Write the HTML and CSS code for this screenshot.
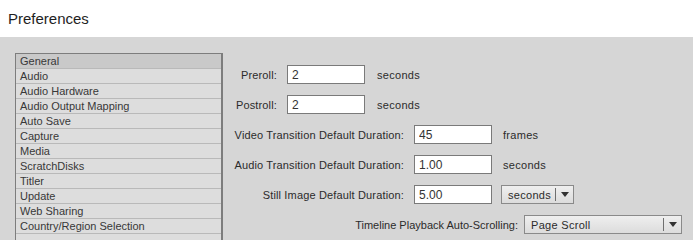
FILE: index.html
```html
<!DOCTYPE html>
<html lang="en">
<head>
  <meta charset="UTF-8" />
  <title>Preferences</title>
  <link rel="stylesheet" href="styles.css">
</head>
<body>

  <header>
    <h1>Preferences</h1>
  </header>

  <div class="panel">
    <ul class="categories">
      <li class="selected">General</li>
      <li>Audio</li>
      <li>Audio Hardware</li>
      <li>Audio Output Mapping</li>
      <li>Auto Save</li>
      <li>Capture</li>
      <li>Media</li>
      <li>ScratchDisks</li>
      <li>Titler</li>
      <li>Update</li>
      <li>Web Sharing</li>
      <li>Country/Region Selection</li>
    </ul>

    <div class="settings">
      <div class="row">
        <label class="lbl-short">Preroll:</label>
        <input type="text" value="2" />
        <span class="unit">seconds</span>
      </div>
      <div class="row">
        <label class="lbl-short">Postroll:</label>
        <input type="text" value="2" />
        <span class="unit">seconds</span>
      </div>
      <div class="row">
        <label class="lbl-mid">Video Transition Default Duration:</label>
        <input type="text" value="45" />
        <span class="unit unit-near">frames</span>
      </div>
      <div class="row">
        <label class="lbl-mid">Audio Transition Default Duration:</label>
        <input type="text" value="1.00" />
        <span class="unit unit-near">seconds</span>
      </div>
      <div class="row">
        <label class="lbl-mid">Still Image Default Duration:</label>
        <input type="text" value="5.00" />
        <div class="dropdown small">
          <span class="value">seconds</span>
          <span class="arrow"></span>
        </div>
      </div>
      <div class="row">
        <label class="lbl-long">Timeline Playback Auto-Scrolling:</label>
        <div class="dropdown wide">
          <span class="value">Page Scroll</span>
          <span class="arrow"></span>
        </div>
      </div>
    </div>
  </div>

</body>
</html>
```

FILE: styles.css
```css
* {
  box-sizing: border-box;
  margin: 0;
  padding: 0;
}

body {
  font-family: 'Liberation Sans', Arial, sans-serif;
  font-size: 11px;
  color: #2b2b2b;
  background: #d6d6d6;
  height: 240px;
  overflow: hidden;
}

header {
  background: #fff;
  height: 37px;
  padding: 10px 0 0 8px;
}

header h1 {
  font-size: 15px;
  font-weight: normal;
  color: #1e1e1e;
}

.panel {
  display: flex;
  padding: 16px 0 0 15px;
}

/* lista de categorias */
.categories {
  list-style: none;
  width: 208px;
  height: 187px;
  border: 1px solid #7d7d7d;
  border-right-width: 2px;
  border-bottom: none;
  background: #dddddd;
}

.categories li {
  height: 15px;
  line-height: 14px;
  padding-left: 4px;
  border-bottom: 1px solid #b9b9b9;
  color: #383838;
}

.categories li.selected {
  background: #c9c9c9;
}

/* ajustes */
.settings {
  padding-top: 12px;
  display: flex;
  flex-direction: column;
  gap: 11px;
}

.row {
  display: flex;
  align-items: center;
  height: 19px;
}

.row label {
  text-align: right;
  color: #2b2b2b;
  letter-spacing: 0.15px;
}

.lbl-short {
  width: 54px;
  margin-right: 10px;
}

.lbl-mid {
  width: 181px;
  margin-right: 10px;
}

.row .lbl-long {
  width: 295px;
  margin-right: 6px;
  letter-spacing: 0;
}

.row input {
  width: 78px;
  height: 19px;
  border: 1px solid #7a7a7a;
  background: #fff;
  padding: 1px 4px 0;
  font-family: inherit;
  font-size: 12px;
  color: #333;
  outline: none;
}

.unit {
  margin-left: 12px;
  letter-spacing: 0.3px;
}

.unit-near {
  margin-left: 11px;
}

.dropdown {
  display: flex;
  align-items: center;
  height: 19px;
  border: 1px solid #8a8a8a;
  background: linear-gradient(#efefef, #dcdcdc);
  font-size: 11px;
}

.dropdown .value {
  flex: 1;
  padding-left: 6px;
  letter-spacing: 0.3px;
}

.dropdown .arrow {
  width: 18px;
  height: 13px;
  border-left: 1px solid #6f6f6f;
  position: relative;
}

.dropdown .arrow::after {
  content: "";
  position: absolute;
  left: 5px;
  top: 4px;
  border-left: 4px solid transparent;
  border-right: 4px solid transparent;
  border-top: 5px solid #333;
}

.dropdown.small {
  width: 73px;
  margin-left: 9px;
}

.dropdown.wide {
  width: 158px;
}
```
